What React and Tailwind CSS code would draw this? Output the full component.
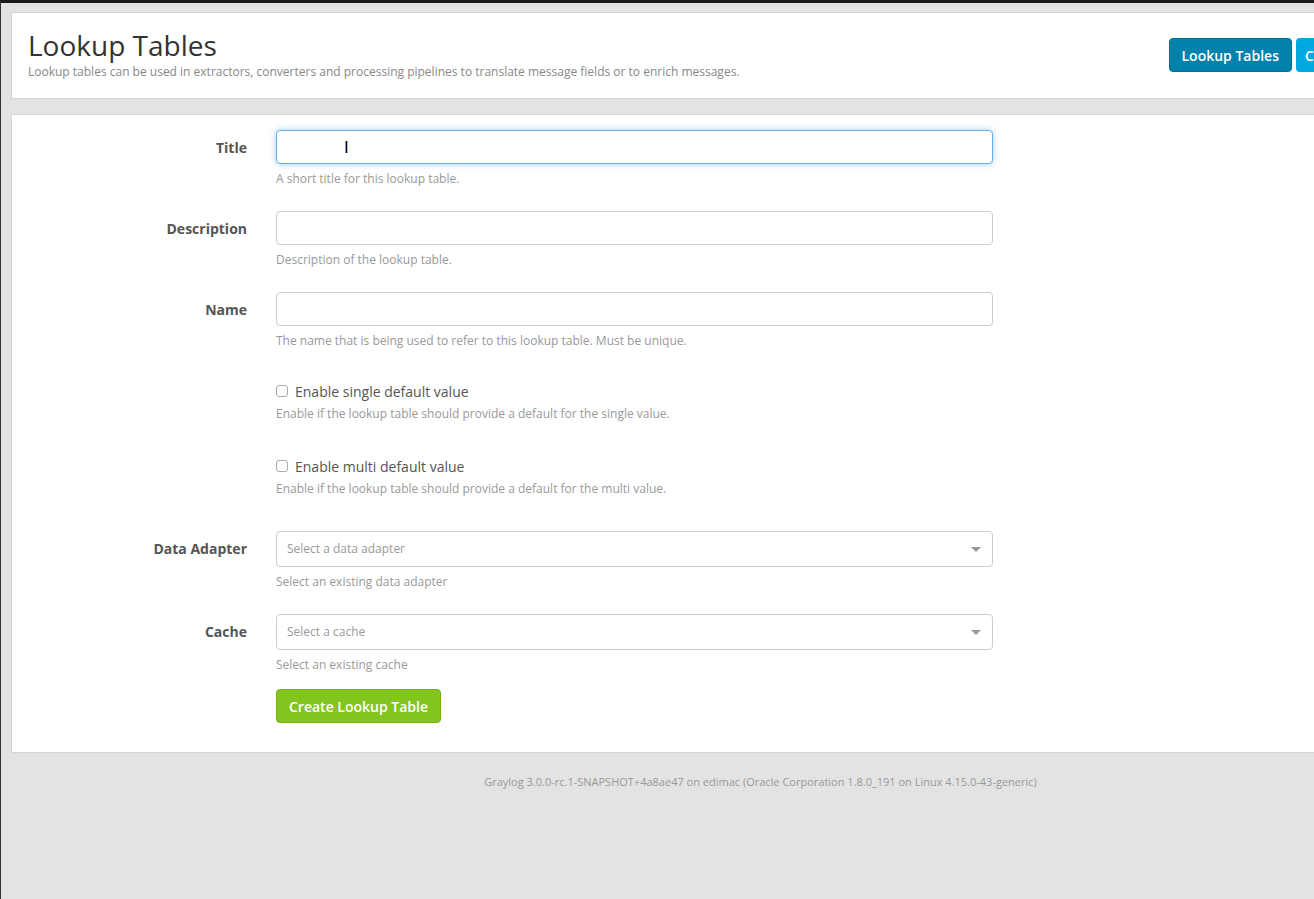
export default function App() {
  const f = { fontFamily: '"Open Sans", "Liberation Sans", sans-serif' };
  const Row = ({ label, help, children, mb = "mb-[24px]" }) => (
    <div className={`flex ${mb}`}>
      <div className="w-[264px] pr-[29px] text-right font-bold text-[14px] text-[#555] pt-[7px]">{label}</div>
      <div className="w-[717px]">
        {children}
        <div className="text-[12px] text-[#999] mt-[6px] leading-[17px]">{help}</div>
      </div>
    </div>
  );
  const Input = ({ focus }) => (
    <div className={`h-[34px] rounded-[4px] bg-white border ${focus ? "border-[#66afe9] shadow-[0_0_6px_rgba(102,175,233,0.6)]" : "border-[#ccc]"} relative`}>
      {focus && <span className="absolute left-[67px] top-[5px] text-[16px] text-black" style={{ fontFamily: "DejaVu Sans" }}>I</span>}
    </div>
  );
  const Select = ({ ph }) => (
    <div className="h-[36px] rounded-[4px] bg-white border border-[#ccc] flex items-center px-[10px] justify-between">
      <span className="text-[12px] text-[#999]">{ph}</span>
      <span className="w-0 h-0 border-l-[5px] border-r-[5px] border-t-[5px] border-l-transparent border-r-transparent border-t-[#999] mr-[1px]"></span>
    </div>
  );
  const Check = ({ label, help }) => (
    <div className="flex mb-[33px]">
      <div className="w-[264px]"></div>
      <div>
        <div className="flex items-center gap-[7px] text-[14px] text-[#555] h-[20px]">
          <span className="w-[12px] h-[12px] border border-[#aaa] rounded-[3px] bg-white"></span>
          {label}
        </div>
        <div className="text-[12px] text-[#999] mt-[4px]">{help}</div>
      </div>
    </div>
  );
  return (
    <div style={f} className="w-[1314px] h-[899px] bg-[#e3e3e3] overflow-hidden border-t-[3px] border-t-[#1b1b1b] border-l border-l-[#333] pt-[9px] pl-[10px]">
      <div className="bg-white border border-[#d4d4d4] border-r-0 h-[87px] flex justify-between pl-[16px] pt-[15px]">
        <div>
          <div className="text-[28px] leading-[34px] text-[#333]">Lookup Tables</div>
          <div className="text-[12px] text-[#888] mt-[1px]">Lookup tables can be used in extractors, converters and processing pipelines to translate message fields or to enrich messages.</div>
        </div>
        <div className="flex gap-[4px] mt-[10px]">
          <div className="h-[34px] px-[12px] flex items-center rounded-[4px] bg-[#0082ad] border border-[#006f94] text-white text-[14px] font-semibold">Lookup Tables</div>
          <div className="h-[34px] w-[18px] rounded-l-[4px] bg-[#00a8e2] text-white text-[14px] font-semibold flex items-center pl-[9px]">C</div>
        </div>
      </div>
      <div className="mt-[15px] bg-white border border-[#d4d4d4] border-r-0 h-[639px] pt-[15px]">
        <Row label="Title" help="A short title for this lookup table."><Input focus /></Row>
        <Row label="Description" help="Description of the lookup table."><Input /></Row>
        <Row label="Name" help="The name that is being used to refer to this lookup table. Must be unique." mb="mb-[32px]"><Input /></Row>
        <Check label="Enable single default value" help="Enable if the lookup table should provide a default for the single value." />
        <Check label="Enable multi default value" help="Enable if the lookup table should provide a default for the multi value." />
        <Row label="Data Adapter" help="Select an existing data adapter"><Select ph="Select a data adapter" /></Row>
        <Row label="Cache" help="Select an existing cache" mb="mb-[16px]"><Select ph="Select a cache" /></Row>
        <div className="pl-[264px]">
          <div className="inline-flex h-[34px] px-[12px] items-center rounded-[4px] bg-[#83c51f] border border-[#74b016] text-white text-[14px] font-semibold">Create Lookup Table</div>
        </div>
      </div>
      <div className="text-center text-[11px] text-[#999] mt-[21px] pl-[196px]">Graylog 3.0.0-rc.1-SNAPSHOT+4a8ae47 on edimac (Oracle Corporation 1.8.0_191 on Linux 4.15.0-43-generic)</div>
    </div>
  );
}
